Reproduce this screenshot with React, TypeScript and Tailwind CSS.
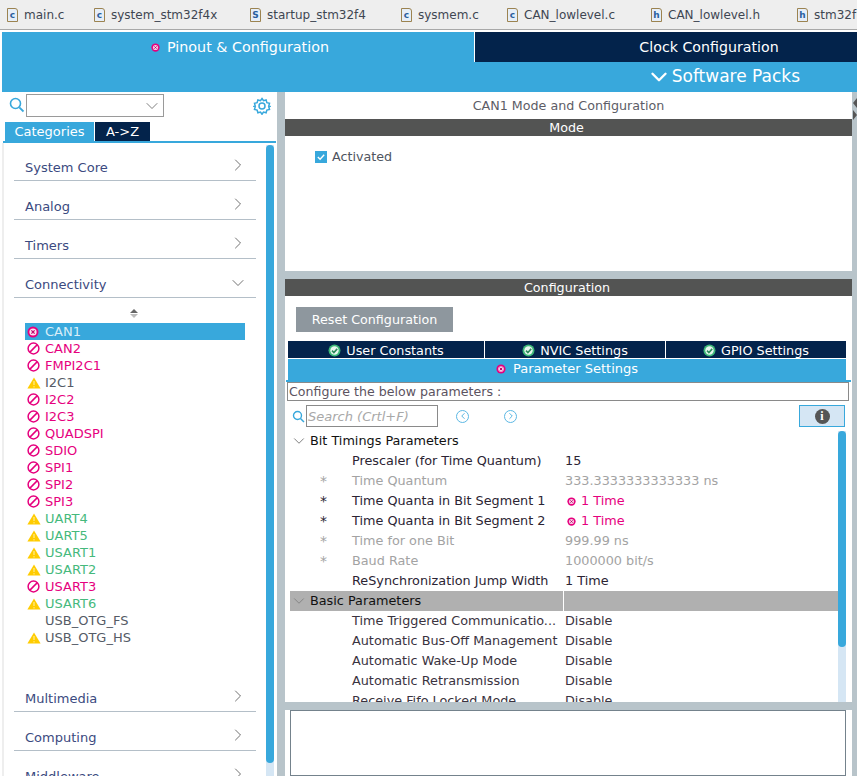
import { ChevronDown, ChevronRight } from "lucide-react";

const files = [
  { letter: "c", name: "main.c", width: "w-[87px]" },
  { letter: "c", name: "system_stm32f4x", width: "w-[156px]" },
  { letter: "S", name: "startup_stm32f4", width: "w-[151px]" },
  { letter: "c", name: "sysmem.c", width: "w-[106px]" },
  { letter: "c", name: "CAN_lowlevel.c", width: "w-[144px]" },
  { letter: "h", name: "CAN_lowlevel.h", width: "w-[146px]" },
  { letter: "h", name: "stm32f", width: "w-[60px]" },
];

const peripherals = [
  { name: "CAN1", state: "selected" },
  { name: "CAN2", state: "blocked" },
  { name: "FMPI2C1", state: "blocked" },
  { name: "I2C1", state: "warn" },
  { name: "I2C2", state: "blocked" },
  { name: "I2C3", state: "blocked" },
  { name: "QUADSPI", state: "blocked" },
  { name: "SDIO", state: "blocked" },
  { name: "SPI1", state: "blocked" },
  { name: "SPI2", state: "blocked" },
  { name: "SPI3", state: "blocked" },
  { name: "UART4", state: "warnok" },
  { name: "UART5", state: "warnok" },
  { name: "USART1", state: "warnok" },
  { name: "USART2", state: "warnok" },
  { name: "USART3", state: "blocked" },
  { name: "USART6", state: "warnok" },
  { name: "USB_OTG_FS", state: "none" },
  { name: "USB_OTG_HS", state: "warn" },
];

const bitTimings = [
  { star: "", name: "Prescaler (for Time Quantum)", value: "15", tone: "normal" },
  { star: "*", name: "Time Quantum", value: "333.3333333333333 ns", tone: "muted" },
  { star: "*", name: "Time Quanta in Bit Segment 1", value: "1 Time", tone: "error" },
  { star: "*", name: "Time Quanta in Bit Segment 2", value: "1 Time", tone: "error" },
  { star: "*", name: "Time for one Bit", value: "999.99 ns", tone: "muted" },
  { star: "*", name: "Baud Rate", value: "1000000 bit/s", tone: "muted" },
  { star: "", name: "ReSynchronization Jump Width", value: "1 Time", tone: "normal" },
];

const basicParams = [
  "Time Triggered Communicatio...",
  "Automatic Bus-Off Management",
  "Automatic Wake-Up Mode",
  "Automatic Retransmission",
  "Receive Fifo Locked Mode",
];

const FileIcon = ({ letter }: { letter: string }) => (
  <span className="relative flex h-[14px] w-[11px] shrink-0 items-center justify-center rounded-tr-[3px] border border-[#9c8350] bg-[#e6eef8] pt-px text-[9px] font-bold leading-none text-[#2b5f9e]">
    {letter}
  </span>
);

const ErrorDot = ({ size = 10 }: { size?: number }) => (
  <svg width={size} height={size} viewBox="0 0 12 12" className="shrink-0">
    <circle cx="6" cy="6" r="5.5" fill="#e6007e" />
    <circle cx="6" cy="6" r="3.4" fill="#f7c6e2" />
    <path d="M4.5 4.5l3 3M7.5 4.5l-3 3" stroke="#b00060" strokeWidth="1.1" />
  </svg>
);

const OkDot = () => (
  <svg width="13" height="13" viewBox="0 0 13 13" className="shrink-0">
    <circle cx="6.5" cy="6.5" r="6" fill="#3cb878" />
    <circle cx="6.5" cy="6.5" r="4.2" fill="#e8f7ef" />
    <path d="M4 6.6l1.9 1.9L9.2 4.9" fill="none" stroke="#2b8a5a" strokeWidth="1.6" />
  </svg>
);

const StateIcon = ({ state }: { state: string }) => {
  if (state === "selected") {
    return (
      <svg width="12" height="12" viewBox="0 0 12 12" className="shrink-0">
        <circle cx="6" cy="6" r="5.5" fill="#e6007e" />
        <circle cx="6" cy="6" r="3.6" fill="#fbe3f1" />
        <path d="M4.4 4.4l3.2 3.2M7.6 4.4l-3.2 3.2" stroke="#c0006a" strokeWidth="1.2" />
      </svg>
    );
  }
  if (state === "blocked") {
    return (
      <svg width="13" height="13" viewBox="0 0 13 13" className="shrink-0">
        <circle cx="6.5" cy="6.5" r="5.4" fill="none" stroke="#e6007e" strokeWidth="1.5" />
        <path d="M2.9 10.1L10.1 2.9" stroke="#e6007e" strokeWidth="1.5" />
      </svg>
    );
  }
  if (state === "warn" || state === "warnok") {
    return (
      <svg width="14" height="12" viewBox="0 0 14 12" className="shrink-0">
        <path d="M7 0.5L13.6 11.6H0.4z" fill="#ffcc00" />
        <path d="M7 4v4M7 9.2v1.2" stroke="#fff2b0" strokeWidth="1" />
      </svg>
    );
  }
  return <span className="w-[13px] shrink-0" />;
};

const Category = ({ name, open = false }: { name: string; open?: boolean }) => (
  <div className="flex h-[39px] shrink-0 items-end">
    <div className="flex h-[27px] w-full items-center justify-between border-b border-[#b4bfc8] pl-[11px] pr-[8px]">
      <span className="pt-[2px] text-[13px] text-[#3b4a80]">{name}</span>
      {open ? (
        <ChevronDown size={20} strokeWidth={1} className="-mt-[3px] text-[#555]" />
      ) : (
        <ChevronRight size={20} strokeWidth={1} className="-mt-[4px] text-[#555]" />
      )}
    </div>
  </div>
);

const LeftPanel = () => (
  <div className="flex h-full w-[275px] shrink-0 flex-col bg-white">
    <div className="flex h-[30px] shrink-0 items-start pt-[2px]">
      <svg width="16" height="16" viewBox="0 0 16 16" className="ml-[7px] mt-[3px] shrink-0">
        <circle cx="6.5" cy="6.5" r="5" fill="none" stroke="#38a8dc" strokeWidth="1.6" />
        <path d="M10.3 10.3L14.5 14.5" stroke="#38a8dc" strokeWidth="1.8" />
      </svg>
      <div className="ml-px flex h-[23px] w-[138px] items-center justify-end border border-[#9a9a9a] pr-px">
        <ChevronDown size={20} strokeWidth={1} className="text-[#666]" />
      </div>
      <svg width="18" height="18" viewBox="0 0 24 24" className="ml-[89px] mt-[3px] shrink-0" fill="none" stroke="#38a8dc" strokeWidth="2">
        <circle cx="12" cy="12" r="4" />
        <path d="M12 2l2 3 3.500-1 1 3.500 3.500 1-1 3.500 1.500 0.500-1.500 0.500 1 3.500-3.500 1-1 3.500-3.500-1-2 3-2-3-3.500 1-1-3.500-3.500-1 1-3.500-1.500-0.500 1.500-0.500-1-3.500 3.500-1 1-3.500 3.500 1z" />
      </svg>
    </div>
    <div className="flex h-[19px] shrink-0 items-stretch gap-px pl-[3px] text-[13px] text-white">
      <div className="flex w-[89px] items-center justify-center bg-[#38a8dc]">Categories</div>
      <div className="flex w-[55px] items-center justify-center bg-[#03234b]">A-&gt;Z</div>
    </div>
    <div className="ml-px h-[2px] w-[273px] shrink-0 bg-[#38a8dc]" />
    <div className="flex min-h-0 flex-1 border-l-2 border-[#eeeeee]">
      <div className="-mt-px flex min-w-0 flex-1 flex-col overflow-hidden pl-[10px] pr-[10px]">
        <Category name="System Core" />
        <Category name="Analog" />
        <Category name="Timers" />
        <Category name="Connectivity" open />
        <div className="flex h-[25px] shrink-0 flex-col items-center justify-center pr-[2px] pt-[6px]">
          <span className="h-0 w-0 border-x-[4px] border-b-[4px] border-x-transparent border-b-[#666]" />
          <span className="mt-px h-0 w-0 border-x-[4px] border-t-[4px] border-x-transparent border-t-[#bbb]" />
        </div>
        <div className="flex h-[350px] shrink-0 flex-col pl-[11px] pr-[11px]">
          {peripherals.map((p) => (
            <div
              key={p.name}
              className={
                p.state === "selected"
                  ? "flex h-[17px] shrink-0 items-center gap-[6px] bg-[#38a8dc] pl-[2px] text-[13px] text-[#d9eef8]"
                  : p.state === "blocked"
                  ? "flex h-[17px] shrink-0 items-center gap-[5px] pl-[2px] text-[13px] text-[#e6007e]"
                  : p.state === "warnok"
                  ? "flex h-[17px] shrink-0 items-center gap-[4px] pl-[2px] text-[13px] text-[#45b97c]"
                  : "flex h-[17px] shrink-0 items-center gap-[4px] pl-[2px] text-[13px] text-[#555b66]"
              }
            >
              <StateIcon state={p.state} />
              <span className={p.state === "none" ? "pl-px" : ""}>{p.name}</span>
            </div>
          ))}
        </div>
        <Category name="Multimedia" />
        <Category name="Computing" />
        <Category name="Middleware" />
      </div>
      <div className="mr-[3px] mt-[2px] flex w-[8px] shrink-0 flex-col bg-[#d5e6f4]">
        <div className="h-[618px] rounded-full bg-[#38a8dc]" />
      </div>
    </div>
  </div>
);

const ParamRow = ({ star, name, value, tone }: { star: string; name: string; value: string; tone: string }) => (
  <div
    className={
      tone === "muted"
        ? "flex h-[20px] shrink-0 items-center text-[#a3a3a3]"
        : "flex h-[20px] shrink-0 items-center text-[#2b2433]"
    }
  >
    <span className="w-[30px] shrink-0" />
    <span className="w-[32px] shrink-0 text-[14px] leading-none">{star}</span>
    <span className="w-[213px] shrink-0 whitespace-nowrap">{name}</span>
    {tone === "error" ? (
      <span className="ml-[2px] flex items-center gap-[5px] text-[#e6007e]">
        <ErrorDot size={9} />
        {value}
      </span>
    ) : (
      <span className="whitespace-nowrap">{value}</span>
    )}
  </div>
);

const ConfigTable = () => (
  <div className="flex min-h-0 flex-1 pl-[5px]">
    <div className="flex min-w-0 flex-1 flex-col overflow-hidden text-[12.8px]">
      <div className="flex h-[20px] shrink-0 items-center text-[#111]">
        <ChevronDown size={18} strokeWidth={1} className="shrink-0 text-[#555]" />
        <span className="whitespace-nowrap pl-[2px]">Bit Timings Parameters</span>
      </div>
      {bitTimings.map((row) => (
        <ParamRow key={row.name} {...row} />
      ))}
      <div className="flex h-[20px] shrink-0 items-stretch bg-[#b0b0b0] text-[#111]">
        <div className="flex w-[274px] items-center border-r border-white">
          <ChevronDown size={18} strokeWidth={1} className="shrink-0 text-[#777]" />
          <span className="whitespace-nowrap pl-[2px]">Basic Parameters</span>
        </div>
      </div>
      {basicParams.map((name) => (
        <div key={name} className="flex h-[20px] shrink-0 items-center text-[#3a3340]">
          <span className="w-[62px] shrink-0" />
          <span className="w-[213px] shrink-0 whitespace-nowrap">{name}</span>
          <span>Disable</span>
        </div>
      ))}
    </div>
    <div className="flex w-[8px] shrink-0 flex-col bg-[#d5e6f4]">
      <div className="h-[216px] rounded-full bg-[#38a8dc]" />
    </div>
    <div className="w-[6px] shrink-0" />
  </div>
);

const RightPanel = () => (
  <div className="flex h-full w-[567px] shrink-0 flex-col bg-[#b8c4ca]">
    <div className="flex h-[179px] shrink-0 flex-col bg-white">
      <div className="flex h-[27px] shrink-0 items-center justify-center pt-[1px] text-[12.7px] text-[#5c5c66]">
        CAN1 Mode and Configuration
      </div>
      <div className="flex h-[17px] shrink-0 items-center justify-center bg-[#535453] pr-[4px] text-[12.7px] text-white">
        Mode
      </div>
      <div className="flex items-center gap-[5px] pl-[30px] pt-[11px] text-[12.7px] text-[#4e5460]">
        <span className="flex h-[12px] w-[12px] items-center justify-center bg-[#38a8dc]">
          <svg width="10" height="10" viewBox="0 0 11 11">
            <path d="M2 5.500l2.500 2.500L9 3" fill="none" stroke="white" strokeWidth="1.500" />
          </svg>
        </span>
        Activated
      </div>
    </div>
    <div className="h-[8px] shrink-0" />
    <div className="flex min-h-0 flex-1 flex-col bg-white">
      <div className="flex h-[17px] shrink-0 items-center justify-center bg-[#535453] pr-[3px] text-[12.7px] text-white">
        Configuration
      </div>
      <div className="pl-[11px] pt-[11px]">
        <div className="flex h-[25px] w-[157px] items-center justify-center bg-[#8e979e] text-[12.7px] text-white">
          Reset Configuration
        </div>
      </div>
      <div className="mt-[9px] flex h-[17px] shrink-0 gap-px pl-[3px] text-[12.8px] text-white">
        <div className="flex w-[196px] items-center justify-center gap-[5px] bg-[#03234b] pt-[2px]"><OkDot />User Constants</div>
        <div className="flex w-[180px] items-center justify-center gap-[5px] bg-[#03234b] pt-[2px]"><OkDot />NVIC Settings</div>
        <div className="flex w-[180px] items-center justify-center gap-[5px] bg-[#03234b] pt-[2px]"><OkDot />GPIO Settings</div>
      </div>
      <div className="ml-[3px] mt-px flex h-[21px] w-[558px] shrink-0 items-center justify-center gap-[7px] bg-[#38a8dc] pb-[2px] text-[13px] text-white">
        <ErrorDot size={10} />
        Parameter Settings
      </div>
      <div className="ml-[1px] h-[2px] w-[565px] shrink-0 bg-[#38a8dc]" />
      <div className="ml-[2px] flex h-[19px] w-[562px] shrink-0 items-center border border-[#8a8a8a] pl-[1px] pt-px text-[12.6px] text-[#5c5360]">
        Configure the below parameters :
      </div>
      <div className="mt-[4px] flex h-[22px] w-[560px] shrink-0 items-center pl-[7px]">
        <svg width="13" height="13" viewBox="0 0 13 13" className="shrink-0">
          <circle cx="5.500" cy="5.500" r="4" fill="none" stroke="#38a8dc" strokeWidth="1.400" />
          <path d="M8.500 8.500L12 12" stroke="#38a8dc" strokeWidth="1.500" />
        </svg>
        <div className="ml-px flex h-[22px] w-[132px] items-center border border-[#8a8a8a] pl-[1px] pt-px text-[13px] italic text-[#a8a8a8]">
          Search (Crtl+F)
        </div>
        <span className="ml-[18px] flex h-[13px] w-[13px] items-center justify-center rounded-full border-[1.5px] border-[#5cb8e4]">
          <ChevronRight size={10} strokeWidth={2} className="rotate-180 text-[#38a8dc]" />
        </span>
        <span className="ml-[35px] flex h-[13px] w-[13px] items-center justify-center rounded-full border-[1.5px] border-[#5cb8e4]">
          <ChevronRight size={10} strokeWidth={2} className="text-[#38a8dc]" />
        </span>
        <div className="ml-auto flex h-[22px] w-[46px] items-center justify-center border border-[#38a8dc] bg-[#d5e6f4]">
          <span className="flex h-[15px] w-[15px] items-center justify-center rounded-full bg-[#555] font-['Liberation_Serif',serif] text-[12px] font-bold leading-none text-white">
            i
          </span>
        </div>
      </div>
      <div className="mt-[4px] flex h-[271px] shrink-0 flex-col">
        <ConfigTable />
      </div>
      <div className="h-[8px] shrink-0 bg-[#b8c4ca]" />
      <div className="ml-[5px] min-h-0 w-[556px] flex-1 border border-[#74828c] bg-white" />
    </div>
  </div>
);

export default function App() {
  return (
    <div className="flex h-[776px] w-[857px] flex-col overflow-hidden bg-white font-['DejaVu_Sans',sans-serif]">
      <div className="flex h-[30px] shrink-0 items-center overflow-hidden border-b border-[#a8a8a8] bg-[#eeeeee] pl-[7px] text-[12px] text-[#3f4652]">
        {files.map((f) => (
          <div key={f.name} className={`flex shrink-0 items-center gap-[6px] ${f.width}`}>
            <FileIcon letter={f.letter} />
            <span className="whitespace-nowrap">{f.name}</span>
          </div>
        ))}
      </div>
      <div className="ml-[2px] mt-[2px] flex h-[60px] shrink-0 flex-col bg-[#38a8dc] text-white">
        <div className="flex h-[30px] shrink-0">
          <div className="flex w-[472px] items-center justify-center gap-[7px] pl-[4px] pt-px text-[14.3px]">
            <ErrorDot size={9} />
            Pinout &amp; Configuration
          </div>
          <div className="flex flex-1 items-center justify-center border-l border-white bg-[#03234b] pl-[86px] pt-px text-[14.2px]">
            Clock Configuration
          </div>
        </div>
        <div className="flex h-[30px] items-center justify-end pr-[57px] text-[17px] font-normal">
          <ChevronDown size={26} strokeWidth={2.2} />
          Software Packs
        </div>
      </div>
      <div className="ml-[2px] flex min-h-0 flex-1">
        <LeftPanel />
        <div className="h-full w-[8px] shrink-0 bg-[#b8c4ca]" />
        <RightPanel />
        <div className="flex h-full flex-1 flex-col items-end bg-[#b8c4ca] pt-[5px]">
          <svg width="4" height="26" viewBox="0 0 4 26">
            <path d="M4 1L0 6l4 5zM0 13l4 5-4 5z" fill="#555" />
          </svg>
        </div>
      </div>
    </div>
  );
}
